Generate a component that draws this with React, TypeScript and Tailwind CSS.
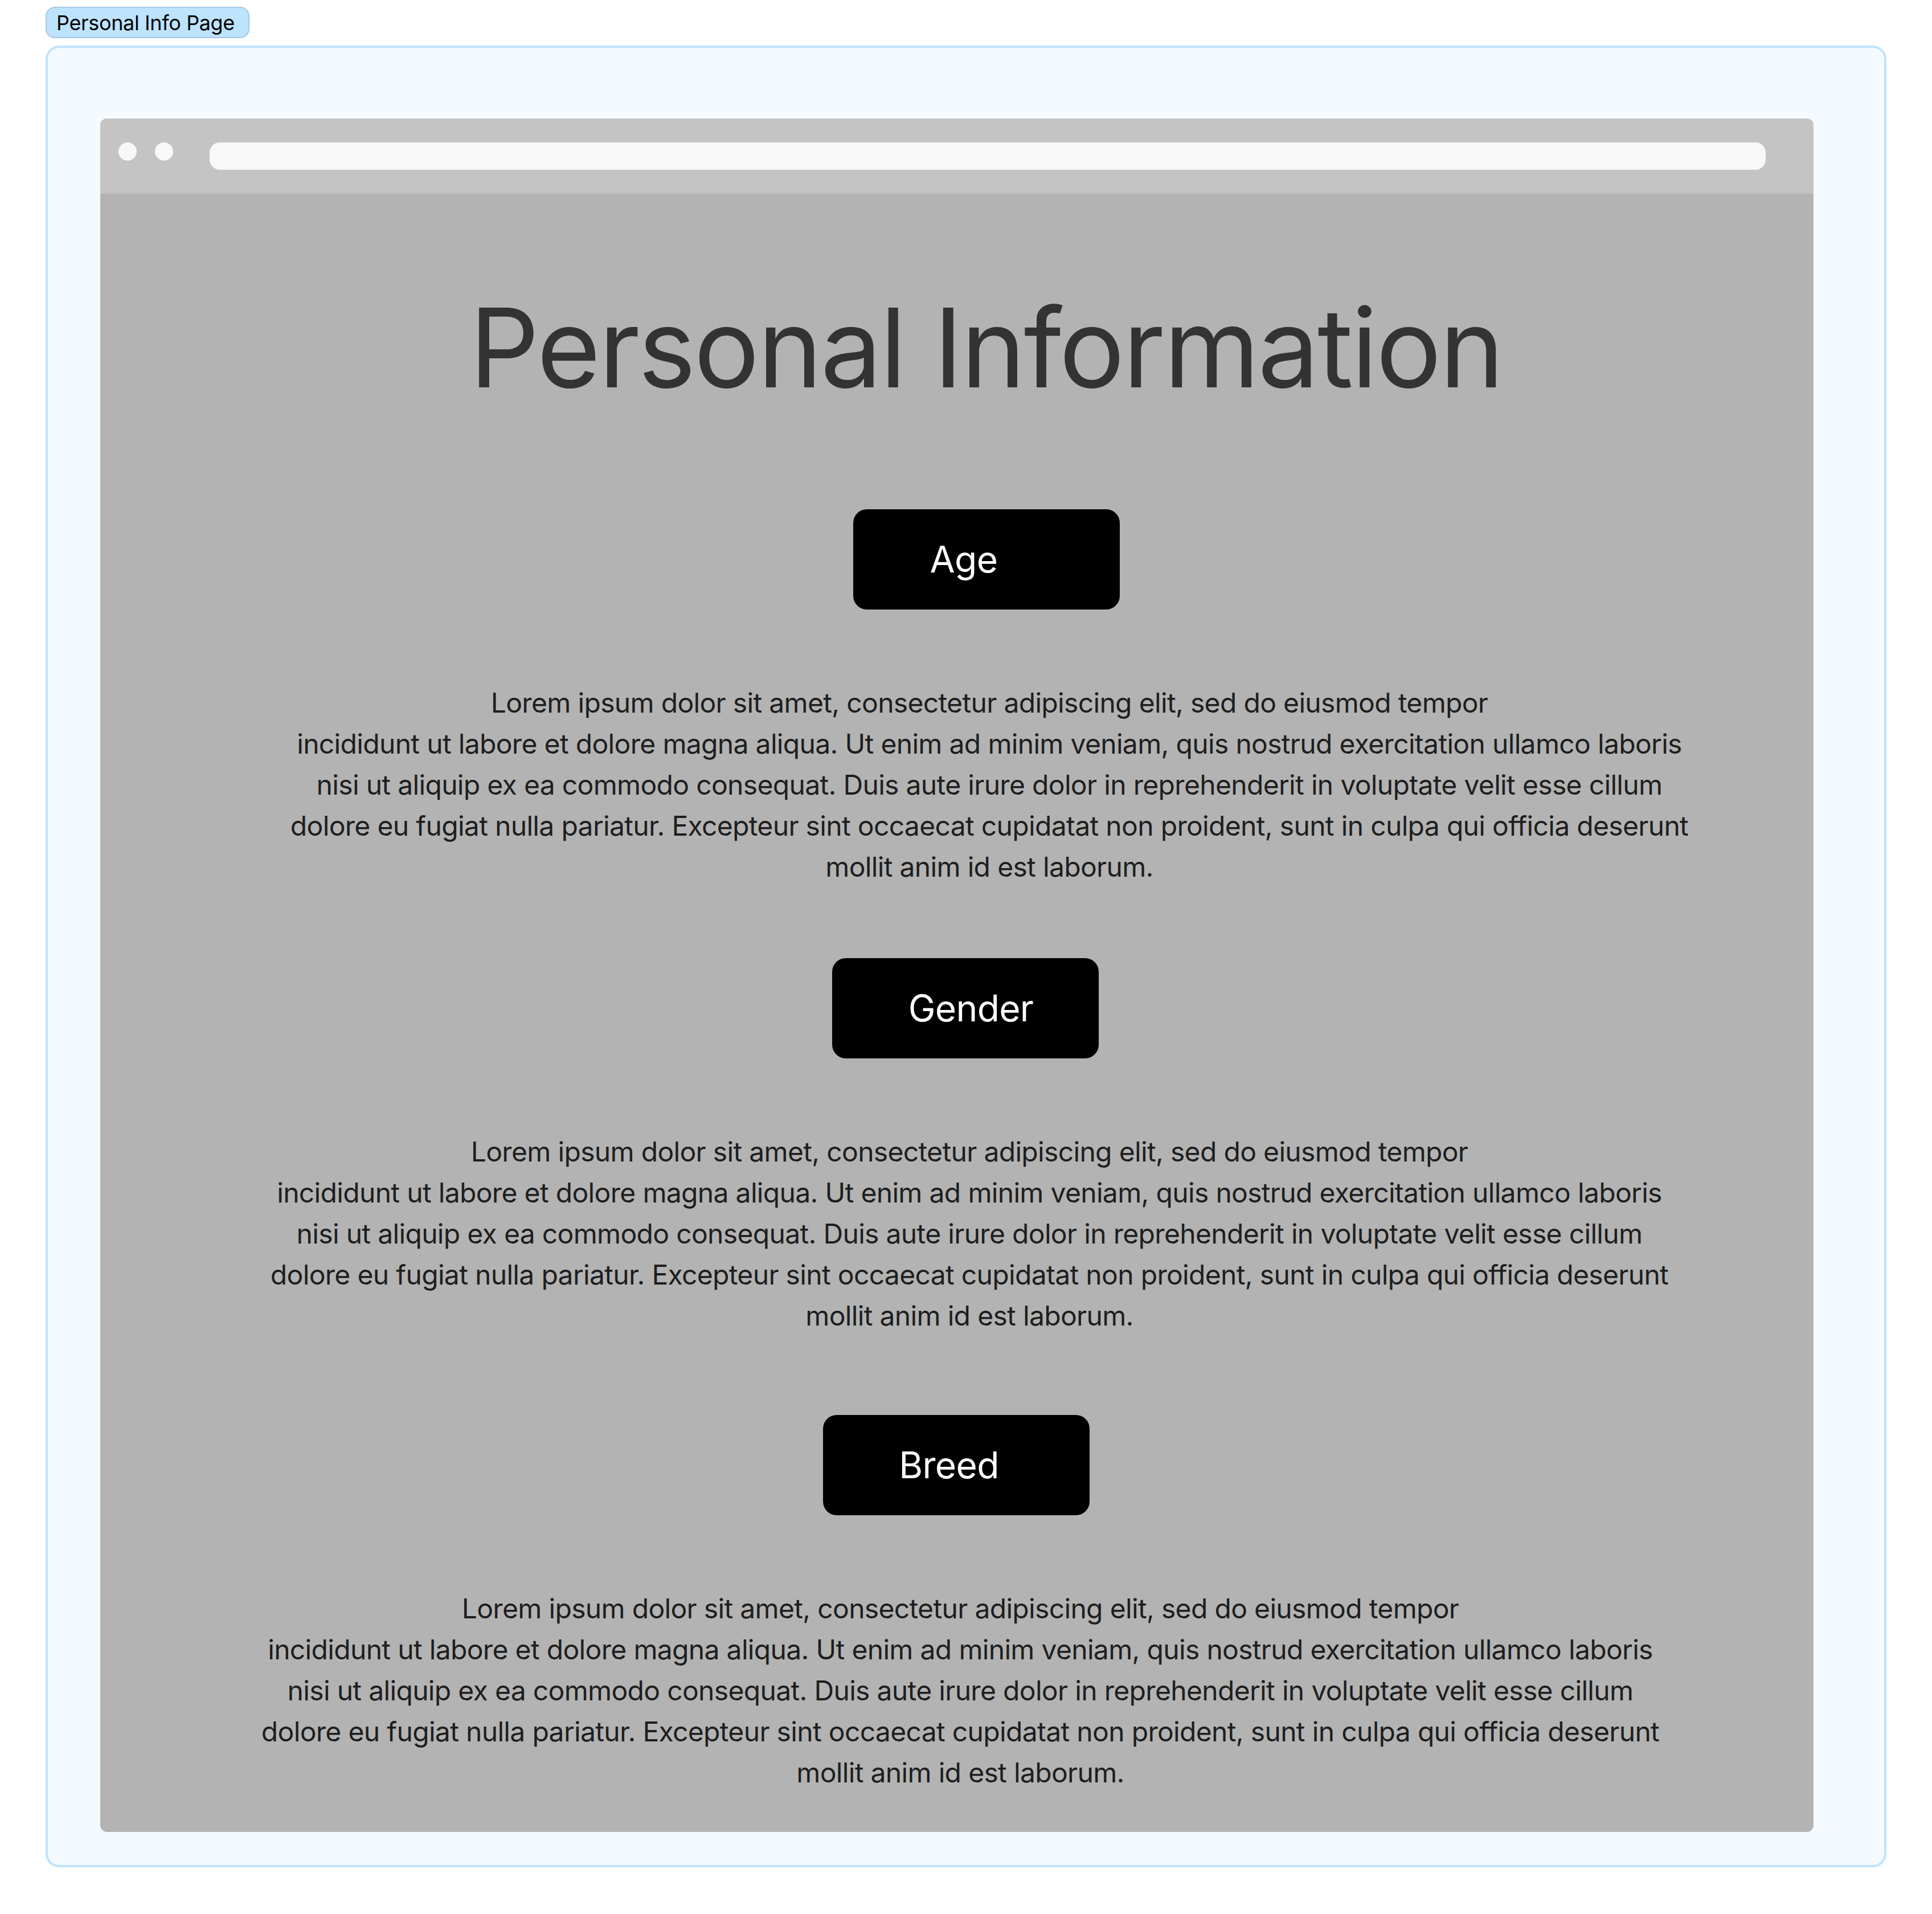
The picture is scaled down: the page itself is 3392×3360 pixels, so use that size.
const lines = [
  "Lorem ipsum dolor sit amet, consectetur adipiscing elit, sed do eiusmod tempor",
  "incididunt ut labore et dolore magna aliqua. Ut enim ad minim veniam, quis nostrud exercitation ullamco laboris",
  "nisi ut aliquip ex ea commodo consequat. Duis aute irure dolor in reprehenderit in voluptate velit esse cillum",
  "dolore eu fugiat nulla pariatur. Excepteur sint occaecat cupidatat non proident, sunt in culpa qui officia deserunt",
  "mollit anim id est laborum.",
];

const Lorem = ({ className }: { className: string }) => (
  <div className={`text-center text-[48px] leading-[72px] tracking-[-0.014em] text-[#1e1e1e] whitespace-nowrap ${className}`}>
    {lines.map((l) => (
      <div key={l}>{l}</div>
    ))}
  </div>
);

const Pill = ({ label, wrap, inner }: { label: string; wrap: string; inner: string }) => (
  <div className={`flex justify-center ${wrap}`}>
    <button className={`w-[468px] h-[176px] rounded-[24px] bg-black text-white text-[64px] leading-none tracking-[-0.01em] flex items-center justify-center ${inner}`}>
      {label}
    </button>
  </div>
);

export default function App() {
  return (
    <div className="min-h-screen bg-white px-[80px] pt-[12px] pb-[80px]" style={{ fontFamily: "Inter, 'Noto Sans', sans-serif" }}>
      <div className="inline-flex h-[55px] items-center rounded-[16px] border-2 border-[#a3c7e3] bg-[#bde3ff] pl-[17px] pr-[24px] text-[36px] tracking-[-0.01em] text-black">
        Personal Info Page
      </div>

      <div className="mt-[13px] rounded-[24px] border-4 border-[#bde3ff] bg-[#f5faff] pl-[92px] pr-[124px] pt-[124px] pb-[58px]">
        <div className="rounded-[12px] overflow-hidden bg-[#b3b3b3]">
          {/* browser chrome */}
          <div className="h-[132px] bg-[#c4c4c4] flex items-start pt-[42px] pl-[32px] pr-[84px]">
            <div className="w-[32px] h-[32px] rounded-full bg-[#f8f8f8]" />
            <div className="ml-[32px] w-[32px] h-[32px] rounded-full bg-[#f8f8f8]" />
            <div className="ml-[64px] flex-1 h-[48px] rounded-[18px] bg-[#f8f8f8]" />
          </div>

          <div className="pt-[154px] pb-[68px]">
            <h1 className="pl-[102px] text-center text-[192px] leading-[232px] tracking-[-0.017em] font-normal text-[#333333]">
              Personal Information
            </h1>

            <Pill label="Age" wrap="mt-[168px] pl-[104px]" inner="pr-[80px]" />
            <Lorem className="mt-[128px] pl-[114px]" />

            <Pill label="Gender" wrap="mt-[124px] pl-[29px]" inner="pl-[20px]" />
            <Lorem className="mt-[128px] pl-[44px]" />

            <Pill label="Breed" wrap="mt-[138px] pr-[2px]" inner="pr-[26px]" />
            <Lorem className="mt-[128px] pl-[12px]" />
          </div>
        </div>
      </div>
    </div>
  );
}
